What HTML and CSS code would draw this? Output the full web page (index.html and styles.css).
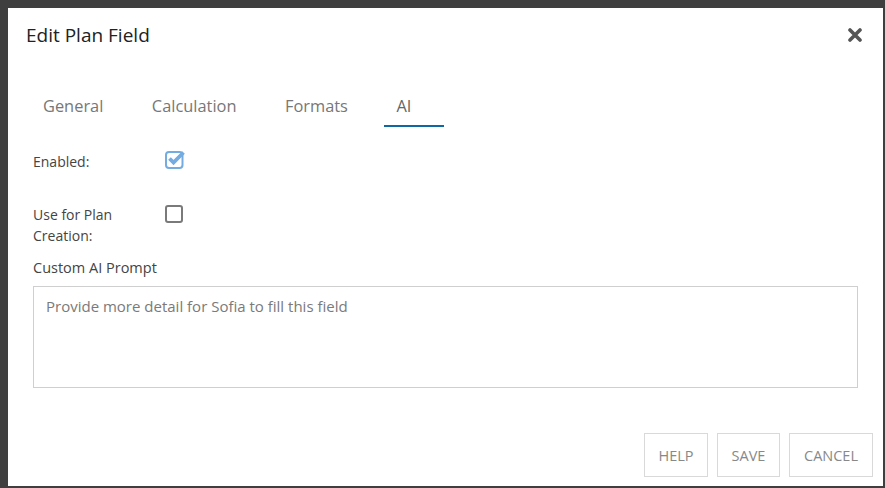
FILE: index.html
```html
<!DOCTYPE html>
<html>
<head>
<meta charset="utf-8">
<link rel="stylesheet" href="styles.css">
</head>
<body>
<div class="dialog">
  <div class="header">
    <h1 class="title">Edit Plan Field</h1>
    <button class="close" aria-label="Close">
      <svg width="14" height="14" viewBox="0 0 14 14"><path d="M2 2 L12 12 M12 2 L2 12" stroke="#555" stroke-width="3.6" stroke-linecap="round"/></svg>
    </button>
  </div>
  <div class="tabs">
    <div class="tab">General</div>
    <div class="tab">Calculation</div>
    <div class="tab">Formats</div>
    <div class="tab active">AI</div>
  </div>
  <div class="form">
    <div class="row row-enabled">
      <div class="label">Enabled:</div>
      <div class="control">
        <svg class="chk" width="22" height="20" viewBox="0 0 22 20">
          <rect x="1" y="3" width="16.5" height="16" rx="3" fill="none" stroke="#74abe0" stroke-width="2"/>
          <path d="M4.5 9.5 L8.5 13.5 L18.5 3.5" fill="none" stroke="#74abe0" stroke-width="3.8" stroke-linejoin="miter"/>
        </svg>
      </div>
    </div>
    <div class="row row-plan">
      <div class="label">Use for Plan Creation:</div>
      <div class="control"><span class="box"></span></div>
    </div>
    <div class="prompt-label">Custom AI Prompt</div>
    <textarea class="prompt" placeholder="Provide more detail for Sofia to fill this field"></textarea>
  </div>
  <div class="footer">
    <button class="btn btn-help">HELP</button>
    <button class="btn btn-save">SAVE</button>
    <button class="btn btn-cancel">CANCEL</button>
  </div>
</div>
</body>
</html>
```
FILE: styles.css
```css
html, body {
  height: 100%;
}
body {
  margin: 8px 2px 2px 8px;
  background: #3f3f3f;
  font-family: "Open Sans", "Noto Sans", sans-serif;
}
.dialog {
  background: #fff;
  height: 478px;
  display: flex;
  flex-direction: column;
  box-sizing: border-box;
}
.header {
  display: flex;
  align-items: flex-start;
  justify-content: space-between;
  padding: 15px 21px 0 18px;
}
.title {
  margin: 0;
  font-size: 19px;
  font-weight: 400;
  line-height: 24px;
  color: #222;
}
.close {
  border: 0;
  background: none;
  padding: 0;
  margin-top: 5px;
  width: 14px;
  height: 14px;
  display: block;
}
.close svg { display: block; }
.tabs {
  display: flex;
  gap: 24.5px;
  padding-left: 23px;
  margin-top: 47px;
}
.tab {
  min-width: 60px;
  box-sizing: border-box;
  padding: 0 12px;
  font-size: 16.4px;
  line-height: 24px;
  height: 33px;
  color: #777;
  border-bottom: 2px solid transparent;
}
.tab.active {
  color: #666;
  border-bottom-color: #0d68a4;
}
.form {
  padding: 0 25px;
  font-size: 14px;
  color: #444;
}
.row {
  display: flex;
}
.label {
  width: 132px;
  line-height: 21px;
  padding-right: 30px;
  box-sizing: border-box;
}
.row-enabled {
  margin-top: 24px;
}
.row-enabled .control {
  margin-top: -2px;
}
.chk { display: block; }
.row-plan {
  margin-top: 32px;
}
.row-plan .control {
  padding-top: 1px;
}
.box {
  display: block;
  width: 14px;
  height: 14px;
  border: 2px solid #7a7a7a;
  border-radius: 3px;
}
.prompt-label {
  margin-top: 11px;
  line-height: 21px;
  font-size: 14.5px;
}
.prompt {
  display: block;
  margin-top: 8px;
  width: 100%;
  height: 102px;
  box-sizing: border-box;
  border: 1px solid #cfcfcf;
  border-radius: 0;
  padding: 9px 12px;
  resize: none;
  font-family: "Open Sans", "Noto Sans", sans-serif;
  font-size: 15px;
  line-height: 20px;
  color: #444;
}
.prompt::placeholder {
  color: #7a7a7a;
  opacity: 1;
}
.footer {
  margin-top: auto;
  display: flex;
  justify-content: flex-end;
  gap: 9px;
  padding: 0 10px 9px 0;
}
.btn {
  height: 44px;
  box-sizing: border-box;
  border: 1px solid #d9d9d9;
  background: #fff;
  color: #888;
  font-family: "Open Sans", "Noto Sans", sans-serif;
  font-size: 14.5px;
  padding: 0;
}
.btn-help { width: 64px; }
.btn-save { width: 63px; }
.btn-cancel { width: 84px; }
```
